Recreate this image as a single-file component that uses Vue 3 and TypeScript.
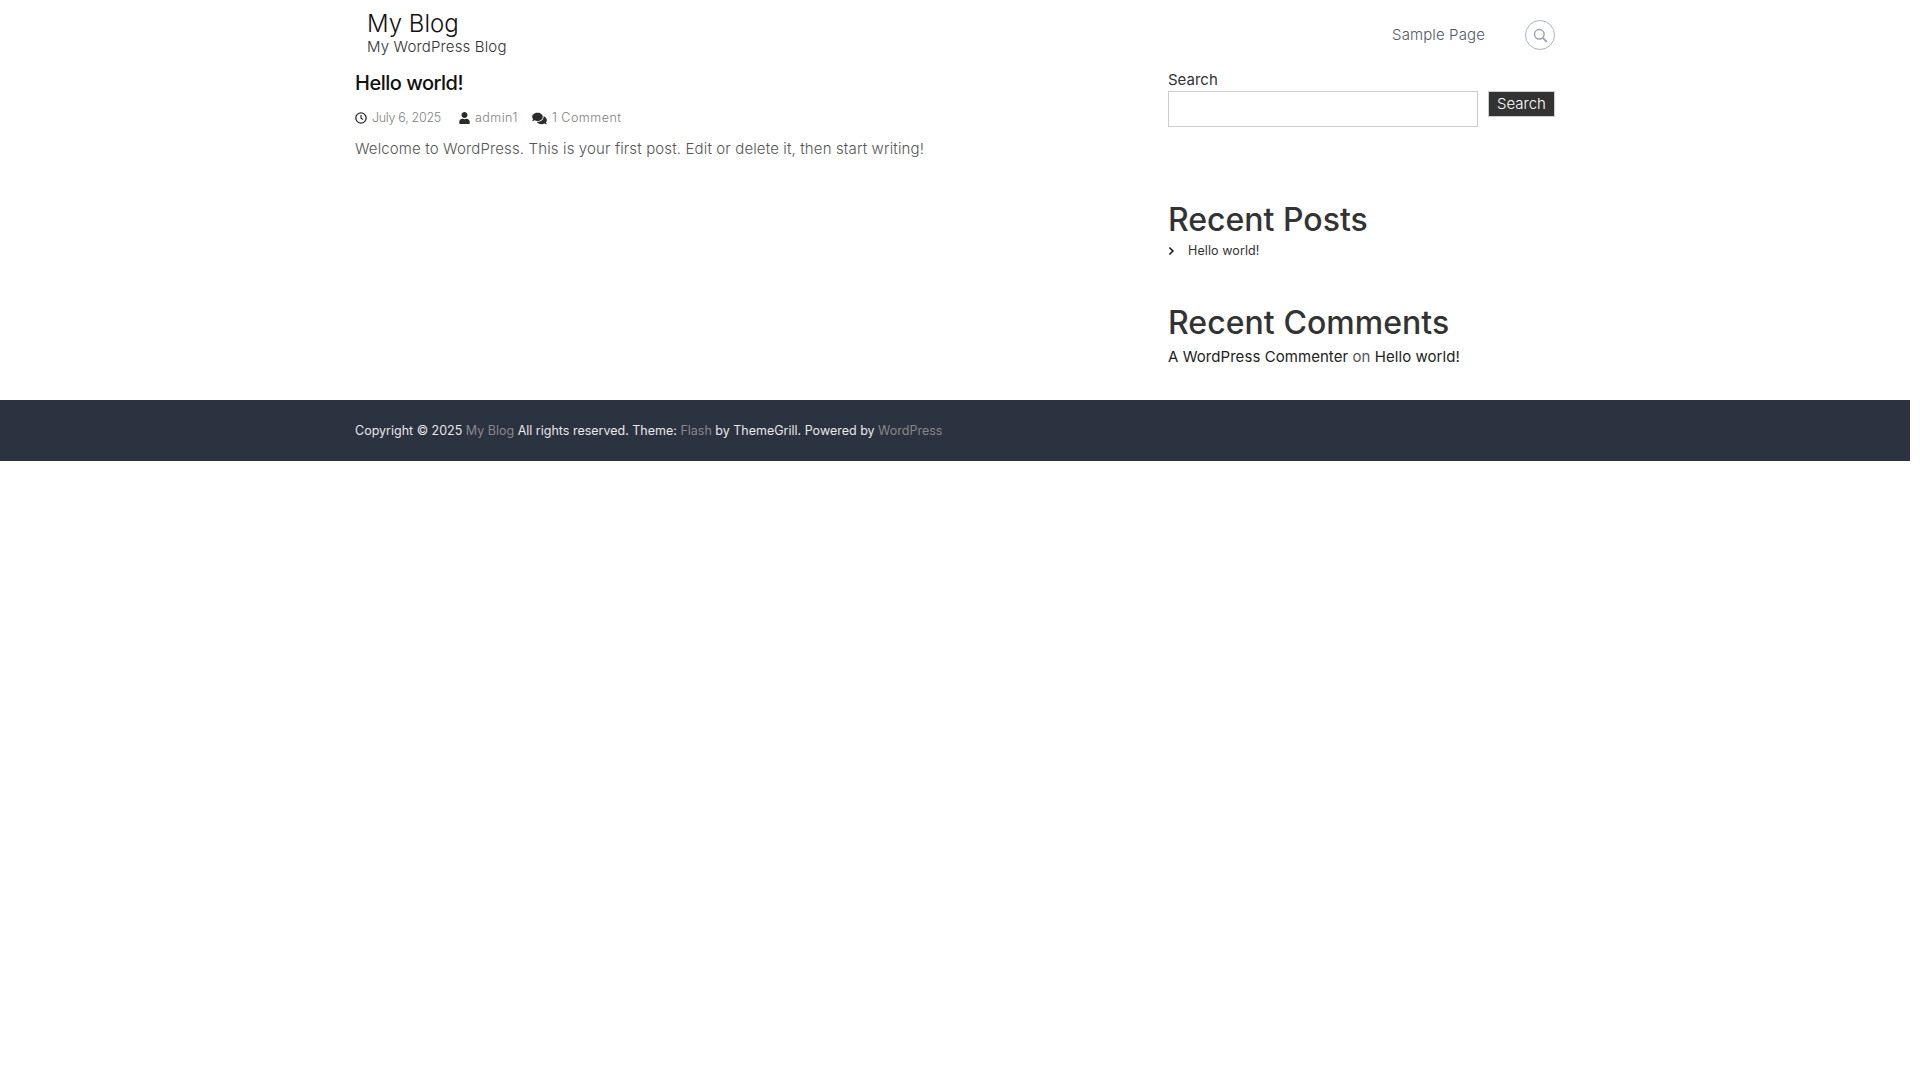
<template>
  <div class="page">
    <header class="site-header">
      <div class="container header-inner">
        <div class="branding">
          <div class="site-title">My Blog</div>
          <div class="site-tagline">My WordPress Blog</div>
        </div>
        <nav class="main-nav">
          <a class="nav-link">Sample Page</a>
          <span class="search-toggle">
            <svg viewBox="0 0 15 15" width="15" height="15"><circle cx="6.300" cy="6.300" r="4.800" fill="none" stroke="#9aa4b4" stroke-width="1.500"/><path d="M9.800 9.800l4 4" fill="none" stroke="#9aa4b4" stroke-width="1.900"/></svg>
          </span>
        </nav>
      </div>
    </header>

    <div class="container content">
      <main class="primary">
        <h2 class="post-title">Hello world!</h2>
        <div class="post-meta">
          <span class="meta-item meta-date">
            <svg class="meta-icon" viewBox="0 0 24 24" width="12" height="12"><circle cx="12" cy="12" r="10.300" fill="none" stroke="#2b2b2b" stroke-width="2.600"/><path d="M12 6v6.500l4 2.500" fill="none" stroke="#2b2b2b" stroke-width="2.400"/></svg>
            July 6, 2025
          </span>
          <span class="meta-item meta-wide">
            <svg class="meta-icon" viewBox="0 0 448 512" width="11" height="12"><path fill="#2b2b2b" d="M224 256c70.700 0 128-57.300 128-128S294.700 0 224 0 96 57.300 96 128s57.300 128 128 128zm89.600 32h-16.700c-22.200 10.200-46.900 16-72.900 16s-50.600-5.800-72.900-16h-16.700C60.200 288 0 348.200 0 422.400V464c0 26.500 21.500 48 48 48h352c26.500 0 48-21.500 48-48v-41.600c0-74.200-60.200-134.400-134.400-134.400z"/></svg>
            admin1
          </span>
          <span class="meta-item meta-wide meta-comments">
            <svg class="meta-icon" viewBox="0 0 576 512" width="15" height="13"><path fill="#2b2b2b" d="M416 192c0-88.400-93.100-160-208-160S0 103.600 0 192c0 34.300 14.100 65.900 38 92-13.400 30.200-35.500 54.200-35.800 54.500-2.200 2.300-2.800 5.700-1.500 8.700S4.800 352 8 352c36.600 0 66.900-12.300 88.700-25 32.200 15.700 70.300 25 111.300 25 114.900 0 208-71.600 208-160zm122 220c23.900-26 38-57.700 38-92 0-66.900-53.500-124.200-129.300-148.100.9 6.600 1.300 13.300 1.300 20.100 0 105.900-107.700 192-240 192-10.800 0-21.300-.8-31.700-1.900C207.800 439.600 281.800 480 368 480c41 0 79.100-9.200 111.300-25 21.800 12.700 52.100 25 88.700 25 3.200 0 6.100-1.900 7.300-4.800 1.300-2.900.7-6.300-1.500-8.700-.3-.3-22.400-24.200-35.800-54.500z"/></svg>
            1 Comment
          </span>
        </div>
        <p class="post-excerpt">Welcome to WordPress. This is your first post. Edit or delete it, then start writing!</p>
      </main>

      <aside class="sidebar">
        <section class="search-widget">
          <label class="search-label">Search</label>
          <div class="search-row">
            <input class="search-input" type="text" />
            <button class="search-btn">Search</button>
          </div>
        </section>
        <section class="widget recent-posts">
          <h2 class="widget-title">Recent Posts</h2>
          <div class="recent-item">
            <svg viewBox="0 0 10 12" width="7" height="10"><path d="M2 1l5 5-5 5" fill="none" stroke="#111" stroke-width="2.200"/></svg>
            <span>Hello world!</span>
          </div>
        </section>
        <section class="widget recent-comments">
          <h2 class="widget-title">Recent Comments</h2>
          <p class="comment-line"><a>A WordPress Commenter</a> <span class="on">on</span> <a>Hello world!</a></p>
        </section>
      </aside>
    </div>

    <footer class="site-footer">
      <div class="container footer-text">
        Copyright © 2025 <a>My Blog</a> All rights reserved. Theme: <a>Flash</a> by ThemeGrill. Powered by <a>WordPress</a>
      </div>
    </footer>
  </div>
</template>

<script setup lang="ts">
</script>

<style>
html, body {
  margin: 0;
  background: #fff;
}
</style>

<style scoped>
.page {
  width: 1910px;
  font-family: Inter, "Noto Sans", sans-serif;
  color: #333;
}

.container {
  width: 1200px;
  margin: 0 auto;
}

.site-header {
  height: 70px;
}

.header-inner {
  display: flex;
  justify-content: space-between;
  align-items: center;
  height: 70px;
}

.branding {
  padding-left: 12px;
  padding-bottom: 5px;
}

.site-title {
  font-size: 24px;
  line-height: 29px;
  font-weight: 300;
  color: #111;
}

.site-tagline {
  font-size: 15px;
  line-height: 18px;
  font-weight: 300;
  letter-spacing: 0.15px;
  color: #333;
}

.main-nav {
  display: flex;
  align-items: center;
  gap: 40px;
}

.nav-link {
  font-size: 15px;
  line-height: 18px;
  font-weight: 300;
  letter-spacing: 0.12px;
  color: #51596a;
  margin-top: -1px;
}

.search-toggle {
  display: flex;
  align-items: center;
  justify-content: center;
  box-sizing: border-box;
  width: 30px;
  height: 30px;
  border: 1px solid #a9b3c4;
  border-radius: 50%;
}

.content {
  display: flex;
  justify-content: space-between;
  height: 330px;
}

.primary {
  width: 760px;
  padding-top: 1px;
}

.post-title {
  margin: 0;
  font-size: 20px;
  line-height: 24px;
  font-weight: 500;
  color: #111;
  letter-spacing: -0.5px;
}

.post-meta {
  display: flex;
  gap: 18px;
  margin-top: 15px;
  font-size: 12.500px;
  line-height: 16px;
  font-weight: 300;
  color: #808080;
}

.meta-item {
  display: flex;
  align-items: center;
  gap: 5px;
}

.meta-date {
  letter-spacing: -0.3px;
}

.meta-wide {
  letter-spacing: 0.5px;
}

.meta-comments {
  margin-left: -4px;
}

.post-excerpt {
  margin: 11px 0 0;
  font-size: 15px;
  line-height: 24px;
  font-weight: 300;
  letter-spacing: 0.13px;
  color: #555;
}

.sidebar {
  width: 387px;
}

.search-label {
  display: block;
  font-size: 15px;
  line-height: 20px;
  color: #333;
}

.search-row {
  display: flex;
  justify-content: space-between;
  align-items: flex-start;
  margin-top: 1px;
}

.search-input {
  box-sizing: border-box;
  width: 310px;
  height: 36px;
  border: 1px solid #ccc;
  padding: 0;
}

.search-btn {
  box-sizing: border-box;
  width: 67px;
  height: 26px;
  padding: 0 0 2px;
  border: 1px solid #ccc;
  background: #333;
  color: #fff;
  font-family: inherit;
  font-size: 15px;
  font-weight: 300;
}

.recent-posts {
  margin-top: 74px;
}

.widget-title {
  margin: 0;
  font-size: 32px;
  line-height: 38px;
  font-weight: 500;
  color: #333;
}

.recent-comments .widget-title {
  letter-spacing: 0.05px;
}

.recent-item {
  display: flex;
  align-items: center;
  gap: 12px;
  margin-top: 4px;
  font-size: 12.500px;
  line-height: 16px;
  color: #333;
}

.recent-item span {
  letter-spacing: 0.1px;
  margin-left: 1px;
}

.recent-comments {
  margin-top: 45px;
}

.comment-line {
  margin: 3px 0 0;
  font-size: 15px;
  line-height: 24px;
  font-weight: 400;
  letter-spacing: 0.06px;
  color: #222;
}

.on {
  color: #555;
}

.site-footer {
  height: 61px;
  background: #2b3240;
}

.footer-text {
  font-size: 12.500px;
  line-height: 61px;
  color: #e8e8e8;
}

.footer-text a {
  color: #888;
}
</style>
